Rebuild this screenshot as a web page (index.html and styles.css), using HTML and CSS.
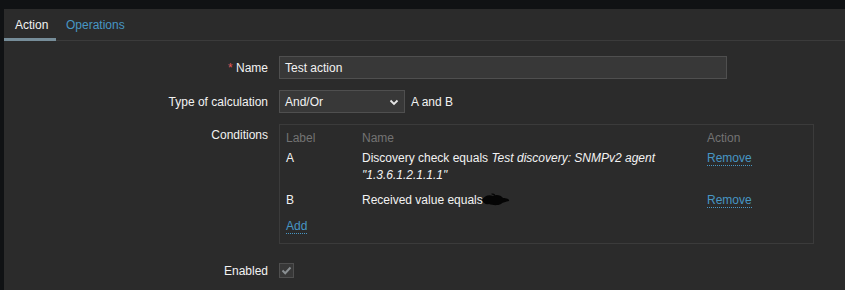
FILE: index.html
```html
<!DOCTYPE html>
<html>
<head>
<meta charset="utf-8">
<link rel="stylesheet" href="styles.css">
</head>
<body>
<div class="panel">
  <div class="tabs">
    <div class="tab active">Action</div>
    <div class="tab link">Operations</div>
  </div>
  <div class="form">
    <div class="lbl row-name"><span class="req">*</span> Name</div>
    <div class="fld row-name"><div class="input">Test action</div></div>

    <div class="lbl row-calc">Type of calculation</div>
    <div class="fld row-calc">
      <div class="select">And/Or
        <svg class="chev" width="10" height="7" viewBox="0 0 10 7"><path d="M1.5 1.5 L5 5 L8.5 1.5" fill="none" stroke="#e6e6e6" stroke-width="1.8"/></svg>
      </div>
      <span class="expr">A and B</span>
    </div>

    <div class="lbl row-cond">Conditions</div>
    <div class="fld row-cond">
      <div class="cbox">
        <div class="crow head">
          <div class="c1">Label</div><div class="c2">Name</div><div class="c3">Action</div>
        </div>
        <div class="crow ra">
          <div class="c1">A</div>
          <div class="c2">Discovery check equals <i>Test discovery: SNMPv2 agent "1.3.6.1.2.1.1.1"</i></div>
          <div class="c3"><span class="dlink">Remove</span></div>
        </div>
        <div class="crow rb">
          <div class="c1">B</div>
          <div class="c2">Received value equals<svg class="blot" width="30" height="14" viewBox="0 0 30 14"><path d="M1 7 C3 3 8 1 12 3 C15 1 20 2 22 5 C25 5 29 6 28 8 C25 9 22 9 20 11 C16 13 11 12 8 11 C5 12 2 10 1 7 Z" fill="#050505"/><path d="M10 1 C12 0 15 1 14 3 Z" fill="#050505"/></svg></div>
          <div class="c3"><span class="dlink">Remove</span></div>
        </div>
        <div class="crow radd">
          <div class="c1"><span class="dlink">Add</span></div>
        </div>
      </div>
    </div>

    <div class="lbl row-en">Enabled</div>
    <div class="fld row-en">
      <div class="check"><svg width="13" height="13" viewBox="0 0 13 13"><path d="M2.5 6.5 L5.2 9.2 L10.5 3.5" fill="none" stroke="#8a8f92" stroke-width="2"/></svg></div>
    </div>
  </div>
</div>
</body>
</html>
```
FILE: styles.css
```css
html, body {
  margin: 0;
  padding: 0;
  background: #101214;
  width: 845px;
  height: 290px;
  overflow: hidden;
}
body {
  font-family: "Liberation Sans", Arial, sans-serif;
  font-size: 12px;
  color: #f2f2f2;
}
.panel {
  margin: 9px 0 0 4px;
  background: #2b2b2b;
  height: 281px;
}
.tabs {
  display: flex;
  height: 31px;
  border-bottom: 1px solid #3b3b3b;
}
.tab {
  padding: 2px 10px 0 10px;
  line-height: 28px;
  height: 27px;
}
.tab.active {
  box-sizing: content-box;
  width: 32px;
  padding-left: 11px;
  padding-right: 9px;
  border-bottom: 3px solid #768d99;
  color: #f2f2f2;
}
.tab.link {
  color: #4796c4;
}
.form {
  display: grid;
  grid-template-columns: 264px 1fr;
  column-gap: 11px;
  padding-top: 15px;
}
.lbl {
  text-align: right;
}
.req {
  color: #e45959;
}
.row-name.lbl { line-height: 22px; padding-top: 1px; }
.row-calc { margin-top: 11px; }
.row-calc.lbl { line-height: 22px; padding-top: 1px; }
.row-cond { margin-top: 11px; }
.row-cond.lbl { padding-top: 4px; line-height: 14px; }
.row-en { margin-top: 19px; }
.row-en.lbl { line-height: 14px; padding-top: 1px; }

.input {
  width: 448px;
  height: 23px;
  box-sizing: border-box;
  background: #383838;
  border: 1px solid #4f4f4f;
  padding: 1px 0 0 5px;
  line-height: 20px;
}
.fld.row-calc {
  display: flex;
  align-items: center;
}
.select {
  position: relative;
  width: 126px;
  height: 23px;
  box-sizing: border-box;
  background: #383838;
  border: 1px solid #4f4f4f;
  padding: 1px 0 0 5px;
  line-height: 20px;
}
.chev {
  position: absolute;
  right: 5px;
  top: 8px;
}
.expr {
  margin-left: 6px;
  padding-top: 1px;
}
.cbox {
  width: 535px;
  height: 120px;
  box-sizing: border-box;
  border: 1px solid #3b3b3b;
  padding: 4px 0 0 6px;
}
.crow {
  display: flex;
  line-height: 17px;
}
.crow.head {
  color: #737373;
  line-height: 18px;
}
.crow.ra { padding-top: 3px; }
.crow.rb { padding-top: 8px; }
.crow.radd { padding-top: 9px; }
.c1 { width: 76px; }
.c2 { width: 345px; padding-right: 10px; box-sizing: border-box; }
.c3 { flex: 1; }
.dlink {
  color: #4796c4;
  border-bottom: 1px dotted #4796c4;
}
.blot {
  vertical-align: -3px;
  margin-left: -2px;
}
.check {
  width: 15px;
  height: 15px;
  box-sizing: border-box;
  background: #383838;
  border: 1px solid #4f4f4f;
  display: flex;
  align-items: center;
  justify-content: center;
}
```
